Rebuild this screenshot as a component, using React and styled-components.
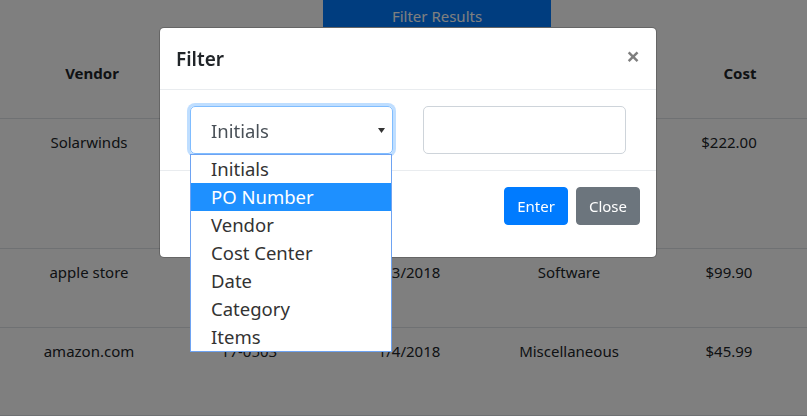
import React from "react";
import styled, { createGlobalStyle } from "styled-components";

const GlobalStyle = createGlobalStyle`
  body {
    margin: 0;
    background: #fff;
    color: #212529;
    font-family: "Noto Sans", "Liberation Sans", sans-serif;
  }
`;

const columns = ["Vendor", "PO Number", "Date", "Category", "Cost"];
const rows = [
  { h: 130, cells: ["Solarwinds", "17-0501", "1/2/2018", "Software", "$222.00"] },
  { h: 79, cells: ["apple store", "17-0502", "1/3/2018", "Software", "$99.90"] },
  { h: 88, cells: ["amazon.com", "17-0503", "1/4/2018", "Miscellaneous", "$45.99"] },
];
const options = ["Initials", "PO Number", "Vendor", "Cost Center", "Date", "Category", "Items"];

const Page = styled.div`
  width: 807px;
  height: 416px;
  overflow: hidden;
  font-size: 15px;
`;

const Toolbar = styled.div`
  display: flex;
  padding-left: 323px;
`;

const TopButton = styled.button`
  width: 228px;
  height: 27px;
  border: 0;
  padding: 4px 0 0;
  background: #007bff;
  color: #fff;
  font: 15px/24px "Noto Sans", "Liberation Sans", sans-serif;
  overflow: hidden;
`;

const HeadRow = styled.div`
  display: grid;
  grid-template-columns: repeat(5, 162px);
  padding-left: 11px;
  height: 91px;
  align-items: center;
  border-bottom: 1px solid #dee2e6;
  font-weight: 700;
  text-align: center;
`;

const Row = styled.div`
  display: grid;
  grid-template-columns: repeat(5, 160px);
  padding: 11px 0 0 9px;
  box-sizing: border-box;
  height: ${(p) => p.h}px;
  border-bottom: 1px solid #dee2e6;
  text-align: center;
  line-height: 24px;
`;

const Backdrop = styled.div`
  position: fixed;
  inset: 0;
  background: rgba(0, 0, 0, 0.5);
`;

const Modal = styled.div`
  position: fixed;
  top: 27px;
  left: 159px;
  width: 498px;
  box-sizing: border-box;
  background: #fff;
  border: 1px solid rgba(0, 0, 0, 0.2);
  border-radius: 5px;
  background-clip: padding-box;
`;

const ModalHeader = styled.div`
  display: flex;
  align-items: flex-start;
  padding: 16px;
  height: 62px;
  box-sizing: border-box;
  border-bottom: 1px solid #e9ecef;
`;

const Title = styled.h5`
  margin: 0;
  font-size: 19px;
  font-weight: 600;
  line-height: 30px;
`;

const CloseX = styled.button`
  margin: -16px -16px -16px auto;
  padding: 16px;
  border: 0;
  background: transparent;
  font: 700 24px/1 "Noto Sans", "Liberation Sans", sans-serif;
  color: #000;
  opacity: 0.5;
`;

const ModalBody = styled.div`
  display: grid;
  grid-template-columns: 203px 203px;
  column-gap: 30px;
  padding: 16px 30px;
`;

const Field = styled.div`
  position: relative;
`;

const SelectBox = styled.div`
  height: 48px;
  box-sizing: border-box;
  display: flex;
  align-items: center;
  padding: 0 20px;
  border: 1px solid #80bdff;
  border-radius: 5px;
  box-shadow: 0 0 0 3px rgba(0, 123, 255, 0.25);
  font-size: 18.5px;
  color: #495057;
`;

const Arrow = styled.svg`
  margin-left: auto;
  margin-right: -13px;
`;

const TextInput = styled.div`
  height: 48px;
  box-sizing: border-box;
  border: 1px solid #ced4da;
  border-radius: 5px;
`;

const Dropdown = styled.ul`
  position: absolute;
  top: 48px;
  left: 0;
  width: 202px;
  box-sizing: border-box;
  margin: 0;
  padding: 0;
  list-style: none;
  background: #fff;
  border: 1px solid #6ea3f2;
  z-index: 2;
`;

const Option = styled.li`
  height: 28px;
  padding-left: 20px;
  font-size: 18.5px;
  line-height: 28px;
  color: ${(p) => (p.active ? "#fff" : "#333")};
  background: ${(p) => (p.active ? "#1e90ff" : "transparent")};
`;

const ModalFooter = styled.div`
  display: flex;
  justify-content: flex-end;
  padding: 12px 12px 28px;
  border-top: 1px solid #e9ecef;
`;

const Button = styled.button`
  margin: 4px;
  height: 38px;
  padding: 6px 12px;
  border: 1px solid ${(p) => (p.variant === "secondary" ? "#6c757d" : "#007bff")};
  border-radius: 4px;
  background: ${(p) => (p.variant === "secondary" ? "#6c757d" : "#007bff")};
  color: #fff;
  font: 15px/24px "Noto Sans", "Liberation Sans", sans-serif;
`;

export default function App() {
  return (
    <>
      <GlobalStyle />
      <Page>
        <Toolbar>
          <TopButton>Filter Results</TopButton>
        </Toolbar>
        <HeadRow>
          {columns.map((c) => (
            <div key={c}>{c}</div>
          ))}
        </HeadRow>
        {rows.map((r, i) => (
          <Row key={i} h={r.h}>
            {r.cells.map((c, j) => (
              <div key={j}>{c}</div>
            ))}
          </Row>
        ))}
      </Page>
      <Backdrop />
      <Modal>
        <ModalHeader>
          <Title>Filter</Title>
          <CloseX>×</CloseX>
        </ModalHeader>
        <ModalBody>
          <Field>
            <SelectBox>
              Initials
              <Arrow width="7" height="5" viewBox="0 0 7 5">
                <path d="M0 0h7L3.5 5z" fill="#333" />
              </Arrow>
            </SelectBox>
            <Dropdown>
              {options.map((o) => (
                <Option key={o} active={o === "PO Number"}>
                  {o}
                </Option>
              ))}
            </Dropdown>
          </Field>
          <Field>
            <TextInput />
          </Field>
        </ModalBody>
        <ModalFooter>
          <Button>Enter</Button>
          <Button variant="secondary">Close</Button>
        </ModalFooter>
      </Modal>
    </>
  );
}
